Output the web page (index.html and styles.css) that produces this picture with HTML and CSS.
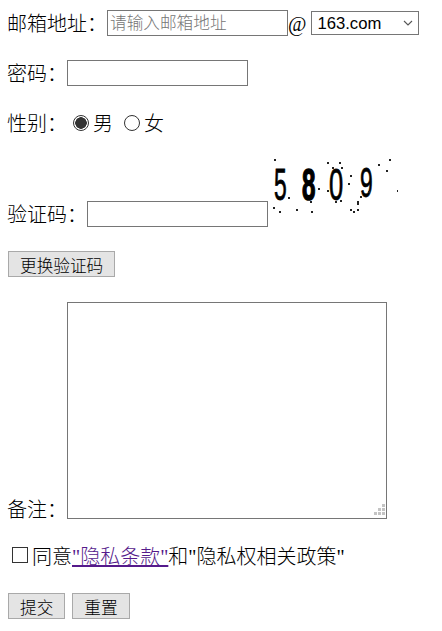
FILE: index.html
```html
<!DOCTYPE html>
<html lang="zh-CN">
<head>
    <meta charset="UTF-8">
    <meta name="viewport" content="width=device-width, initial-scale=1.0">
    <title>注册</title>
    <link rel="stylesheet" href="styles.css">
</head>
<body>
    <form>
        <p class="row first">邮箱地址：<input type="text" class="field" placeholder="请输入邮箱地址">@
            <select class="domain">
                <option>163.com</option>
                <option>qq.com</option>
            </select>
        </p>
        <p class="row">密码：<input type="password" class="field"></p>
        <p class="row">性别：<input type="radio" name="sex" class="radio" checked>男
            <input type="radio" name="sex" class="radio">女
        </p>
        <p class="row">验证码：<input type="text" class="field"><svg class="captcha" width="130" height="63" viewBox="0 9 130 63">
                <g class="digits">
                    <text class="thin" transform="translate(6 50) scale(.52 1)">5</text>
                    <text class="heavy" transform="translate(34 50) scale(.55 1)">8</text>
                    <text class="thin" transform="translate(61 50) scale(.58 1)">0</text>
                    <text class="thin" transform="translate(92 47) scale(.52 .95)">9</text>
                </g>
                <g class="noise">
                    <rect x="6" y="9" width="2" height="2"/>
                    <rect x="5" y="57" width="2" height="2"/>
                    <rect x="11" y="61" width="2" height="2"/>
                    <rect x="28" y="59" width="2" height="2"/>
                    <rect x="43" y="61" width="2" height="2"/>
                    <rect x="59" y="12" width="2" height="2"/>
                    <rect x="64" y="17" width="2" height="2"/>
                    <rect x="71" y="12" width="2" height="2"/>
                    <rect x="73" y="17" width="2" height="2"/>
                    <rect x="82" y="25" width="2" height="2"/>
                    <rect x="80" y="33" width="2" height="2"/>
                    <rect x="110" y="14" width="2" height="2"/>
                    <rect x="118" y="20" width="2" height="2"/>
                    <rect x="121" y="9" width="2" height="2"/>
                    <rect x="129" y="40" width="1" height="2"/>
                    <rect x="82" y="59" width="2" height="2"/>
                    <rect x="85" y="61" width="2" height="2"/>
                    <rect x="89" y="59" width="2" height="2"/>
                    <rect x="89" y="51" width="2" height="4"/>
                    <rect x="92" y="46" width="2" height="2"/>
                    <rect x="20" y="47" width="2" height="2"/>
                    <rect x="42" y="51" width="2" height="2"/>
                    <rect x="50" y="38" width="2" height="2"/>
                    <rect x="59" y="40" width="2" height="2"/>
                    <rect x="67" y="51" width="2" height="2"/>
                    <rect x="72" y="50" width="2" height="2"/>
                    <rect x="100" y="41" width="2" height="2"/>
                </g>
            </svg></p>
        <p class="row"><button type="button" class="btn">更换验证码</button></p>
        <p class="row notes-row">备注：<textarea class="notes"></textarea></p>
        <p class="row agree-row"><input type="checkbox" class="check">同意<a href="#" class="policy">"隐私条款"</a>和"隐私权相关政策"</p>
        <p class="row"><button type="submit" class="btn">提交</button> <button type="reset" class="btn reset">重置</button></p>
    </form>
</body>
</html>
```
FILE: styles.css
```css
body {
    margin: 9px 8px 8px 7px;
    background-color: #fff;
    color: #000;
    font-family: "Liberation Serif", "Noto Sans CJK SC", serif;
    font-size: 20px;
    font-weight: 300;
    line-height: 30px;
}
.row {
    margin: 20px 0;
}
.row.first {
    margin-top: 0;
}
.notes-row {
    margin-bottom: 17px;
}
.agree-row {
    margin-top: 17px;
    margin-bottom: 19px;
}
.field {
    width: 181px;
    height: 26px;
    box-sizing: border-box;
    padding: 2px 2px 0;
    border: 1px solid #767676;
    font-family: "Liberation Sans", "Noto Sans CJK SC", sans-serif;
    font-size: 16.67px;
    font-weight: 300;
    vertical-align: 2px;
}
.field::placeholder {
    color: #757575;
}
.domain {
    width: 108px;
    height: 24px;
    box-sizing: border-box;
    padding: 2px 0 0 5px;
    border: 1px solid #767676;
    background: #fff url("data:image/svg+xml,%3Csvg xmlns='http://www.w3.org/2000/svg' width='10' height='6'%3E%3Cpath d='M1 1l4 4 4-4' fill='none' stroke='%23555' stroke-width='1.1'/%3E%3C/svg%3E") no-repeat right 5px center;
    appearance: none;
    color: #000;
    font-family: "Liberation Sans", sans-serif;
    font-size: 16.67px;
    vertical-align: 2px;
}
.radio {
    width: 16px;
    height: 16px;
    margin: 0 4px 0 6px;
    border: 1px solid #333;
    border-radius: 50%;
    background-color: #fff;
    appearance: none;
}
.radio:checked {
    background: radial-gradient(circle, #333 0, #333 5.5px, #fff 6px);
}
.check {
    width: 16px;
    height: 16px;
    margin: 0 4px 0 5px;
    border: 1px solid #333;
    background-color: #fff;
    appearance: none;
    vertical-align: 1px;
}
.captcha {
    display: inline-block;
}
.digits text {
    font-family: "Liberation Sans", sans-serif;
    font-size: 44px;
    fill: #000;
    stroke: #000;
}
.digits .thin {
    font-weight: 400;
    stroke-width: .8px;
}
.digits .heavy {
    font-weight: bold;
    stroke-width: 1.5px;
}
.noise rect {
    fill: #222;
}
.btn {
    height: 26px;
    margin-left: 1px;
    padding: 1px 11px;
    border: 1px solid #a9a9a9;
    background-color: #e4e4e4;
    color: #000;
    font-family: "Liberation Sans", "Noto Sans CJK SC", sans-serif;
    font-size: 16.67px;
    font-weight: 300;
}
.reset {
    margin-left: 2px;
}
.notes {
    width: 320px;
    height: 217px;
    box-sizing: border-box;
    margin-top: 2px;
    border: 1px solid #767676;
    vertical-align: -2px;
}
.notes::-webkit-resizer {
    background: url("data:image/svg+xml,%3Csvg xmlns='http://www.w3.org/2000/svg' width='15' height='15' fill='%23c4c4c4'%3E%3Crect x='11' y='1' width='3' height='3'/%3E%3Crect x='7' y='5' width='3' height='3'/%3E%3Crect x='11' y='5' width='3' height='3'/%3E%3Crect x='3' y='9' width='3' height='3'/%3E%3Crect x='7' y='9' width='3' height='3'/%3E%3Crect x='11' y='9' width='3' height='3'/%3E%3C/svg%3E") no-repeat right bottom;
}
.policy {
    color: #551a8b;
}
```
